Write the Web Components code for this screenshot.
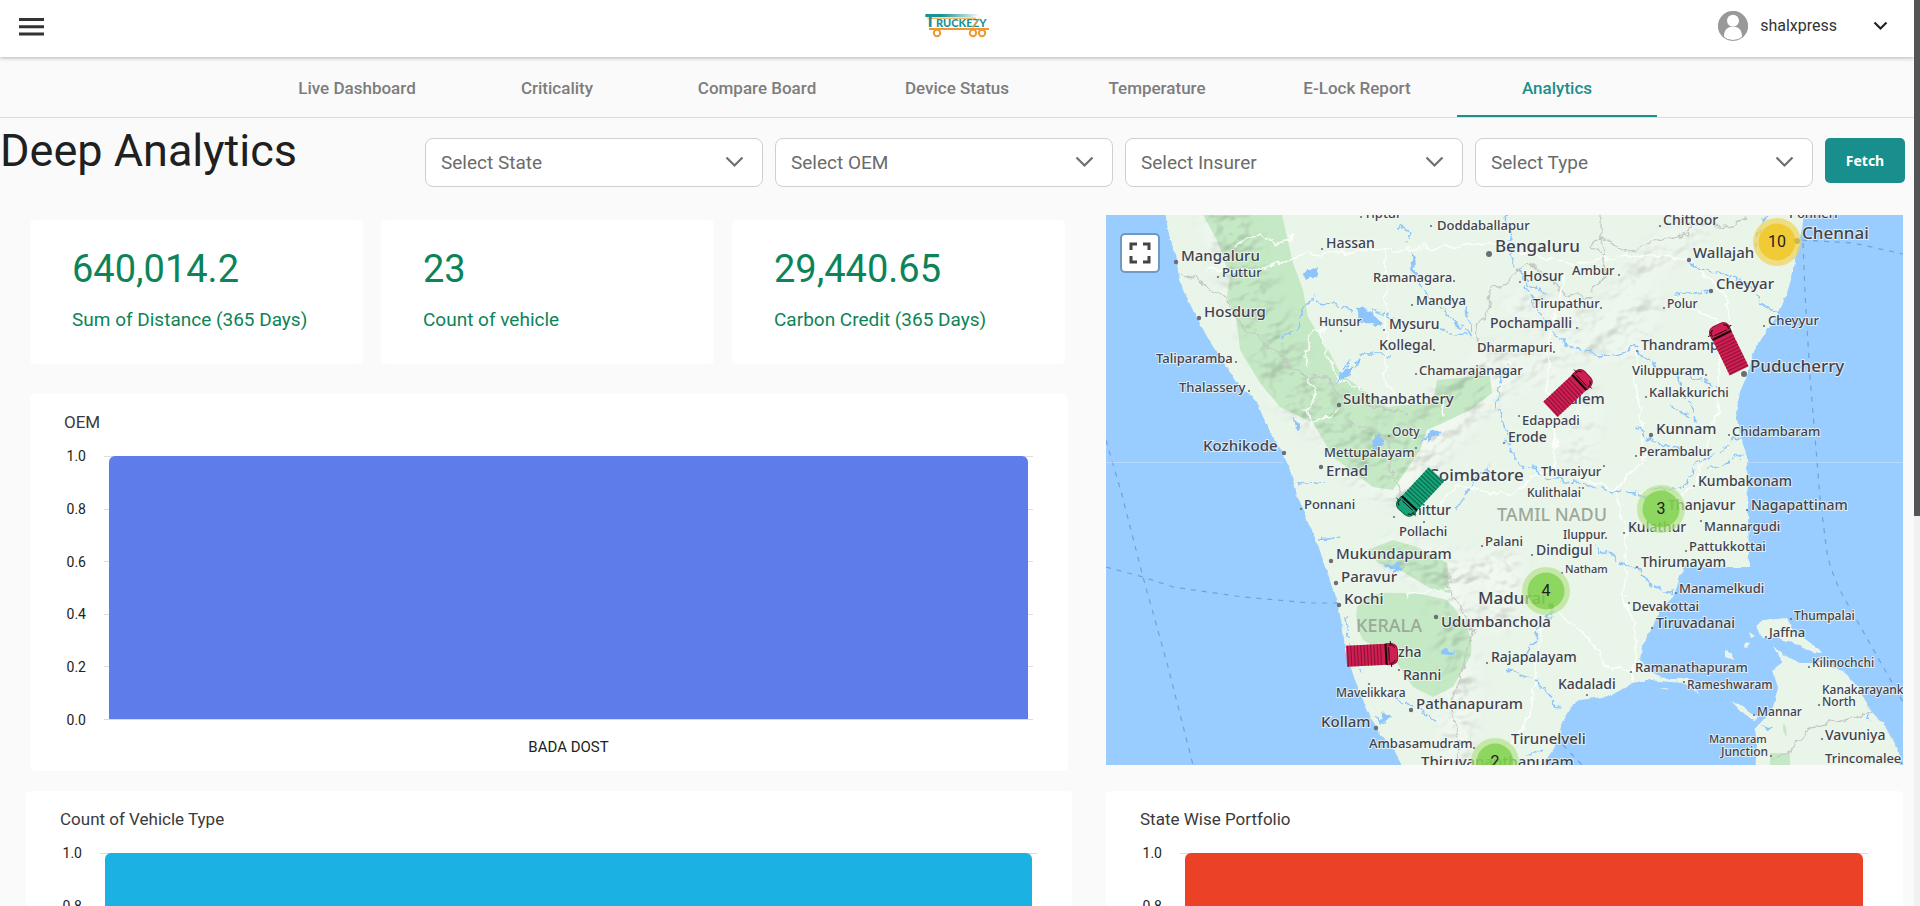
<!DOCTYPE html>
<html lang="en">
<head>
<meta charset="utf-8">
<title>Truckezy – Deep Analytics</title>
<style>
  html, body { margin: 0; height: 100%; }
  body { font-family: Roboto, "Liberation Sans", sans-serif; color: #212121; background: #fafafa; overflow: hidden; }
</style>
</head>
<body>
<app-shell>
  <app-header slot="header" user="shalxpress"></app-header>
  <tab-bar slot="header">
    <tab-link>Live Dashboard</tab-link>
    <tab-link>Criticality</tab-link>
    <tab-link>Compare Board</tab-link>
    <tab-link>Device Status</tab-link>
    <tab-link>Temperature</tab-link>
    <tab-link>E-Lock Report</tab-link>
    <tab-link active>Analytics</tab-link>
  </tab-bar>
  <filter-bar heading="Deep Analytics">
    <filter-select label="Select State"></filter-select>
    <filter-select label="Select OEM"></filter-select>
    <filter-select label="Select Insurer"></filter-select>
    <filter-select label="Select Type"></filter-select>
  </filter-bar>
  <dash-grid>
    <kpi-card slot="kpi" value="640,014.2">Sum of Distance (365 Days)</kpi-card>
    <kpi-card slot="kpi" value="23">Count of vehicle</kpi-card>
    <kpi-card slot="kpi" value="29,440.65">Carbon Credit (365 Days)</kpi-card>
    <bar-card slot="main" heading="OEM" category="BADA DOST" color="#5f7dea"></bar-card>
    <fleet-map slot="map"></fleet-map>
    <bar-card slot="bottom" heading="Count of Vehicle Type" color="#1cb1e3"></bar-card>
    <bar-card slot="bottom" heading="State Wise Portfolio" color="#eb4127"></bar-card>
  </dash-grid>
</app-shell>

<script>
const define = (name, html, setup) => {
  const tpl = document.createElement('template');
  tpl.innerHTML = html;
  customElements.define(name, class extends HTMLElement {
    constructor() {
      super();
      this.attachShadow({ mode: 'open' }).append(tpl.content.cloneNode(true));
    }
    connectedCallback() { if (setup) setup(this, this.shadowRoot); }
  });
};

define('app-shell', `
  <style>
    :host { display: grid; grid-template-columns: minmax(0, 1fr) 6px; height: 100vh; }
    .page { overflow-y: auto; scrollbar-width: none; }
    .rail { background: #f1f1f1; }
    .thumb { height: 57%; background: #555; }
  </style>
  <div class="page"><slot name="header"></slot><main><slot></slot></main></div>
  <div class="rail" aria-hidden="true"><div class="thumb"></div></div>
`);

define('app-header', `
  <style>
    :host { display: block; position: relative; z-index: 1; background: #fff; box-shadow: 0 1px 4px rgba(0,0,0,.28); }
    header { display: grid; grid-template-columns: 1fr auto 1fr; align-items: center; height: 57px; padding: 0 26px 0 18px; }
    button { display: flex; align-items: center; border: 0; padding: 0; background: none; font: inherit; color: inherit; cursor: pointer; }
    .logo { display: block; padding: 2px 0 0 8px; }
    .user { justify-self: end; font-size: 16px; line-height: 20px; color: #333; padding-bottom: 5px; }
    .name { margin: 0 36px 0 12px; }
    .menu { justify-self: start; padding-bottom: 4px; }
    svg { display: block; }
  </style>
  <header>
    <button class="menu" aria-label="Open menu">
      <svg width="28" height="18" viewBox="0 0 28 18"><path d="M1 1.5h25M1 8.8h25M1 16h25" stroke="#333" stroke-width="3"/></svg>
    </button>
    <a class="logo" href="#" aria-label="Truckezy">
      <svg width="66" height="34" viewBox="0 0 66 34">
        <defs><linearGradient id="g"><stop offset=".3" stop-color="#17949a"/><stop offset="1" stop-color="#17949a" stop-opacity="0"/></linearGradient></defs>
        <path d="M2 4.500h50v1.400H4z" fill="#f0a23c" opacity=".75"/>
        <path d="M1 1h56l-8 3H3z" fill="url(#g)"/>
        <text x="1" y="14" font-family="Lato, sans-serif" font-weight="900" font-size="17" fill="#17949a">T</text>
        <text x="12" y="14" font-family="Lato, sans-serif" font-weight="900" font-size="11" fill="#17949a">RUCKEZY</text>
        <path d="M54 6l2-1.500-6 10h-2z" fill="#f0982f"/>
        <path d="M5 16h60" stroke="#f0982f" stroke-width="2"/>
        <g fill="#fff" stroke="#f0982f" stroke-width="2"><circle cx="13" cy="20" r="3.200"/><circle cx="49" cy="20" r="3.200"/><circle cx="58" cy="20" r="3.200"/></g>
      </svg>
    </a>
    <button class="user">
      <svg width="30" height="30" viewBox="0 0 30 30"><defs><clipPath id="c"><circle cx="15" cy="15" r="15"/></clipPath></defs>
        <g clip-path="url(#c)"><path fill="#999" d="M0 0h30v30H0z"/><circle cx="15" cy="9.800" r="6" fill="#fff"/><path d="M6 30v-6q1-7 6-8h6q5 1 6 8v6z" fill="#fff"/></g><circle cx="15" cy="15" r="14.500" fill="none" stroke="#999"/></svg>
      <span class="name"></span>
      <svg width="15" height="10" viewBox="0 0 15 10"><path d="M1.500 1.500l6 6 6-6" fill="none" stroke="#222" stroke-width="2.200"/></svg>
    </button>
  </header>
`, (el, root) => { root.querySelector('.name').textContent = el.getAttribute('user'); });

define('tab-bar', `
  <style>
    :host { display: block; border-bottom: 1px solid #dcdcdc; }
    nav { display: flex; justify-content: center; height: 60px; }
  </style>
  <nav><slot></slot></nav>
`);

define('tab-link', `
  <style>
    :host { display: block; flex: 0 1 200px; }
    a { display: flex; box-sizing: border-box; height: 100%; align-items: center; justify-content: center; padding-top: 4px;
        border-bottom: 2px solid transparent; color: #7d7d7d; font-size: 17px; line-height: 20px; font-weight: 500; text-decoration: none; white-space: nowrap; }
    :host([active]) a { color: #1c8f8c; border-color: #1c8f8c; }
  </style>
  <a href="#"><slot></slot></a>
`);

define('filter-bar', `
  <style>
    :host { display: flex; align-items: flex-start; gap: 12px; padding: 7px 9px 0 0; }
    h1 { flex: 0 0 413px; margin: 0; font-size: 45px; line-height: 52px; font-weight: 400; color: #202020; }
    ::slotted(*) { margin-top: 13px; }
    button { flex: 0 0 80px; height: 45px; margin-top: 13px; border: 0; border-radius: 5px; background: #198f8d; color: #fff;
             font: 700 14px/20px "Noto Sans", sans-serif; cursor: pointer; }
  </style>
  <h1></h1>
  <slot></slot>
  <button type="button">Fetch</button>
`, (el, root) => { root.querySelector('h1').textContent = el.getAttribute('heading'); });

define('filter-select', `
  <style>
    :host { display: block; flex: 1 1 0; min-width: 0; position: relative; }
    select { display: block; appearance: none; box-sizing: border-box; width: 100%; height: 49px; padding: 0 48px 0 15px; border: 1px solid #cfcfcf;
             border-radius: 8px; background: #fff; color: #6b6b6b; font: 19px/24px Roboto, sans-serif; }
    svg { position: absolute; right: 19px; top: 18px; pointer-events: none; }
  </style>
  <select><option></option></select>
  <svg width="19" height="12" viewBox="0 0 19 12"><path d="M1.500 1.500l8 8 8-8" fill="none" stroke="#6c6f73" stroke-width="2.200"/></svg>
`, (el, root) => {
  const label = el.getAttribute('label');
  root.querySelector('select').setAttribute('aria-label', label);
  root.querySelector('option').textContent = label;
});

define('dash-grid', `
  <style>
    :host { display: grid; grid-template-columns: minmax(0, 1046fr) minmax(0, 797fr); column-gap: 34px; row-gap: 20px; padding: 28px 11px 80px 26px; }
    .left { display: flex; flex-direction: column; gap: 30px; padding: 5px 4px 0; }
    .kpis { display: grid; grid-template-columns: repeat(3, minmax(0, 1fr)); gap: 18px; padding-right: 3px; }
  </style>
  <div class="left"><div class="kpis"><slot name="kpi"></slot></div><slot name="main"></slot></div>
  <slot name="map"></slot>
  <slot name="bottom"></slot>
`);

define('kpi-card', `
  <style>
    :host { display: block; box-sizing: border-box; height: 144px; padding: 26px 12px 0 42px; background: #fff; border-radius: 5px; color: #0c8457; }
    p { margin: 0; white-space: nowrap; }
    .value { font-size: 38px; line-height: 46px; }
    .label { font-size: 19px; line-height: 24px; margin-top: 16px; }
  </style>
  <p class="value"></p>
  <p class="label"><slot></slot></p>
`, (el, root) => { root.querySelector('.value').textContent = el.getAttribute('value'); });

define('bar-card', `
  <style>
    :host { display: block; padding: 18px 35px 15px 34px; background: #fff; border-radius: 5px; }
    h2 { margin: 0 0 24px; font-size: 17px; line-height: 20px; font-weight: 400; color: #3a3a3a; }
    .chart { display: grid; grid-template-columns: 22px minmax(0, 1fr); column-gap: 18px; font-size: 14px; color: #222; }
    .axis { display: flex; flex-direction: column; justify-content: space-between; margin: -10px 0; line-height: 20px; text-align: right; }
    .plot { display: grid; height: 264px; }
    .lines, .bar { grid-area: 1 / 1; }
    .lines { display: flex; flex-direction: column; justify-content: space-between; }
    .lines i { height: 1px; background: #dcdcdc; }
    .bar { margin: 0 5px 1px; border-radius: 6px 6px 0 0; background: var(--bar); }
    .cat { grid-column: 2; margin-top: 18px; line-height: 18px; font-size: 15px; text-align: center; }
  </style>
  <h2></h2>
  <div class="chart">
    <div class="axis"><span>1.0</span><span>0.8</span><span>0.6</span><span>0.4</span><span>0.2</span><span>0.0</span></div>
    <div class="plot"><div class="lines"><i></i><i></i><i></i><i></i><i></i><i></i></div><div class="bar"></div></div>
    <div class="cat"></div>
  </div>
`, (el, root) => {
  root.querySelector('h2').textContent = el.getAttribute('heading');
  root.querySelector('.cat').textContent = el.getAttribute('category') || '';
  el.style.setProperty('--bar', el.getAttribute('color'));
});

/* Place names: [name, x, baseline, font size, dot x, dot y] */
const PLACES = [
  ['Tiptur',258,3,13,255,2],['Doddaballapur',331,15,13,325,11],['Hassan',220,33,14,216,34],['Mangaluru',75,46,15,70,47],
  ['Puttur',116,62,13,112,62],['Bengaluru',389,37,17,383,39],['Ramanagara',267,67,13,348,66],['Mandya',310,90,13,306,90],
  ['Hosdurg',98,102,15,93,103],['Hunsur',213,111,12,235,116],['Mysuru',283,114,14,278,115],['Kollegal',273,135,14,328,135],
  ['Pochampalli',384,113,14,471,113],['Dharmapuri',371,137,13,448,137],['Taliparamba',50,148,13,130,147],['Chamarajanagar',313,160,13,310,159],
  ['Thalassery',73,177,13,143,176],['Sulthanbathery',237,189,15,233,190],['Ooty',286,221,12,283,221],['Kozhikode',97,236,15,178,238],
  ['Mettupalayam',218,242,13,310,233],['Ernad',220,261,15,215,252],['Coimbatore',322,266,17],['Chittoor',557,10,14,554,11],
  ['Ponneri',683,3,13],['Chennai',696,24,17,691,26],['Wallajah',587,43,15,583,45],['Ambur',466,60,13,513,60],
  ['Hosur',417,66,14,414,67],['Cheyyar',610,74,15,605,76],['Tirupathur',427,93,13,495,93],['Polur',561,93,12,558,93],
  ['Cheyyur',662,110,13,658,111],['Thandrampet',535,135,14,531,136],['Viluppuram',526,160,13,600,160],['Puducherry',644,157,17,638,159],
  ['Kallakkurichi',543,182,13,540,182],['Salem',455,189,15],['Edappadi',416,210,13,413,201],['Erode',402,227,14,398,228],
  ['Kunnam',550,219,15,545,220],['Chidambaram',626,221,13,623,220],['Perambalur',533,241,13,530,241],['Thuraiyur',435,261,13,498,251],
  ['Kulithalai',421,282,12,477,273],['Kumbakonam',592,271,14,588,271],['Ponnani',198,294,13,195,294],['Chittur',298,300,14,288,302],
  ['Pollachi',293,321,13,318,307],['Mukundapuram',230,344,15,225,346],['Paravur',235,367,15,230,368],['Kochi',238,389,15,233,390],
  ['Udumbanchola',335,412,15,330,402],['Madurai',372,389,17,445,391],['Alappuzha',245,442,14],['Ranni',297,465,14,293,455],
  ['Mavelikkara',230,482,12,263,469],['Pathanapuram',310,494,15,305,495],['Rajapalayam',385,447,14,381,448],['Palani',379,331,13,376,331],
  ['Kollam',215,512,15,270,513],['Ambasamudram',263,533,13,368,533],['Thiruvananthapuram',315,552,15],
  ['Thanjavur',562,295,14],['Nagapattinam',645,295,14,641,295],['Kulathur',522,317,14,518,318],['Mannargudi',598,316,13,595,306],
  ['Iluppur',457,324,12,500,323],['Dindigul',430,340,14,426,340],['Pattukkottai',583,336,13,580,336],['Thirumayam',535,352,14,531,352],
  ['Natham',459,358,11,456,358],['Manamelkudi',573,378,13,570,378],['Devakottai',526,396,13,523,388],['Tiruvadanai',550,413,14,546,413],
  ['Thumpalai',688,405,12,685,404],['Jaffna',663,422,13,660,422],['Kilinochchi',706,452,12,703,452],['Ramanathapuram',529,457,13,525,457],
  ['Rameshwaram',581,474,12,578,467],['Kadaladi',452,474,14,481,480],['Kanakarayankulam',716,479,12],['North',716,491,12,713,490],
  ['Mannar',651,501,12,648,500],['Vavuniya',719,525,14,716,524],['Mannaram',603,528,11],['Junction',615,541,12,665,541],
  ['Trincomalee',719,548,13,795,548],['Tirunelveli',405,529,15]
];
/* Trucks: x, y, heading in degrees, paint */
const TRUCKS = [[266,440,-3,'r'],[622,133,-116,'r'],[463,177,-43,'r'],[313,278,133,'g']];
const CLUSTERS = [[671,27,10,'mid'],[555,294,3,'low'],[440,376,4,'low'],[389,547,2,'low']];

define('fleet-map', `
  <style>
    :host { display: block; position: relative; height: 550px; overflow: hidden; background: #99ccff; }
    svg.map { display: block; width: 100%; height: 100%; }
    .places text { font-family: "Noto Sans", sans-serif; font-weight: 500; fill: #41434f; stroke: #f3f8f2; stroke-width: 2px; stroke-opacity: .75; paint-order: stroke; }
    .places circle { fill: #6b6d78; }
    .region { font: 500 18px "Noto Sans", sans-serif; fill: #9ba89a; }
    .low .o { fill: #b5e28c; fill-opacity: .7 } .low .i { fill: #6ecc39; fill-opacity: .65 }
    .mid .o { fill: #f1d357; fill-opacity: .7 } .mid .i { fill: #f0c20c; fill-opacity: .65 }
    .clusters text { font: 16px Roboto, sans-serif; fill: #222; text-anchor: middle; }
    button { position: absolute; left: 14px; top: 18px; width: 40px; height: 40px; padding: 0; border: 2px solid rgba(0,0,0,.25); border-radius: 5px;
             background: #fff; background-clip: padding-box; display: grid; place-items: center; cursor: pointer; }
  </style>
  <svg class="map" viewBox="0 0 797 550" preserveAspectRatio="xMidYMid slice" role="img" aria-label="Fleet map of South India">
    <defs>
      <clipPath id="land"><use href="#india"/><use href="#lanka"/></clipPath>
      <filter id="wob" x="-5%" y="-5%" width="110%" height="110%"><feTurbulence type="fractalNoise" baseFrequency=".09" numOctaves="3" seed="4"/><feDisplacementMap in="SourceGraphic" scale="11" xChannelSelector="R" yChannelSelector="G"/></filter>
      <filter id="coast" x="-2%" y="-2%" width="104%" height="104%"><feTurbulence type="fractalNoise" baseFrequency=".12" numOctaves="2" seed="9"/><feDisplacementMap in="SourceGraphic" scale="4" xChannelSelector="R" yChannelSelector="G"/></filter>
      <filter id="soft"><feGaussianBlur stdDeviation="9"/></filter>
      <filter id="relief" x="0" y="0" width="100%" height="100%" color-interpolation-filters="sRGB">
        <feTurbulence type="fractalNoise" baseFrequency=".035 .045" numOctaves="3" seed="12"/>
        <feDiffuseLighting surfaceScale="7" diffuseConstant="1.12" lighting-color="#ffffff"><feDistantLight azimuth="225" elevation="62"/></feDiffuseLighting>
      </filter>
      <mask id="hills"><g filter="url(#soft)" fill="none" stroke="#fff" stroke-linecap="round" stroke-linejoin="round">
        <path d="M120 0L150 90 185 170 240 215 300 235M260 250L290 265 350 190 384 165" stroke-width="44"/>
        <path d="M290 340L350 360 345 420 355 470 350 530M350 360L400 350 390 400" stroke-width="30"/>
        <path d="M410 90L470 100 500 110 530 60 590 10M390 170L440 150 480 190 470 240M440 130L520 130 545 90" stroke-width="26" stroke="#aaa"/>
        <path d="M330 215L390 150" stroke-width="40"/>
      </g></mask>
    </defs>
    <rect width="797" height="550" fill="#99ccff"/>
    <g fill="#eaf5ea" filter="url(#coast)">
      <path id="india" d="M58-9L62 15 71 47 73 65 81 83 92 105 104 127 119 150 134 172 151 187 161 212 177 238 186 258 192 285 197 295 212 330 222 360 232 390 237 415 239 435 249 465 261 495 272 515 289 537 302 560H430L442 542 449 532 457 505 465 492 474 485 481 484 504 481 527 468 541 465 577 468 594 480 582 464 560 464 541 455 534 445 536 432 546 412 557 392 567 382 574 362 579 352H643L642 295 641 242 633 215 630 198 634 177 642 158 647 138 661 115 673 98 681 78 687 58 691 35 696 15 699-9Z"/>
      <path id="lanka" d="M649 560L651 528 649 515 657 505 667 492 672 472 666 455 677 447 667 432 685 444 694 448 714 448 737 455 754 475 764 495 777 508 791 532 796 560ZM649 411L657 405 681 403 687 415 714 435 716 439 707 438 687 428 671 423 657 422ZM626 487L637 491 652 502 648 506 636 497ZM619 436l7 3 1 6-8-3zM638 428l6 1-3 4-4-1zM643 417l6 4-4 2zM553 474l11-2-4 2z"/>
    </g>
    <g clip-path="url(#land)">
      <g fill="#c5e8c5">
        <path d="M97 0H176L181 22 187 48 197 75 202 102 224 138 234 158 257 175 281 192 327 187 331 165 384 160 386 178 364 195 337 208 321 215 314 235 287 275 267 272 227 242 207 208 174 192 154 168 134 135 131 108 121 82 124 62 111 25Z"/>
        <path d="M251 392Q262 376 290 378L311 378 341 385Q372 418 364 442L347 472 327 482 307 472 287 442 257 425Q248 410 251 392Z"/>
        <path d="M261 335L287 325 311 332 341 348 344 378 327 375 294 355 272 348Z"/>
        <path d="M664 538h20v12h-20zM678 508q4 6 2 14-5-8-2-14z"/>
      </g>
      <g mask="url(#hills)" style="mix-blend-mode:multiply"><rect width="797" height="550" filter="url(#relief)" opacity=".3"/></g>
      <g fill="none" filter="url(#wob)">
        <path d="M494-5V22L484 30 494 40M400 70L411 55 421 50 440 62 460 80 484 82M421 50L440 58M484 77L500 60 494 22 521 37 551 27 581 20 584 8 627 12 640 0M404 68L386 73 382 95 371 115 374 135M72 62L91 63 107 75 122 88 141 115 167 135 194 158 224 165 234 182 277 195 301 198M241 205L281 225 287 262 300 290M341 352L344 375 367 415 354 462 344 495 354 528 350 550M666 545L690 530 705 512 740 505 765 498" stroke="#c3c8c2" stroke-width="1.300"/>
        <path d="M130 30L155 18 170 28 187 22M100 55H150L175 50 195 40 280 35 330 33 383 28 430 40 465 50 520 40 560 42 583 45 620 80 634 158M280 35V170L300 190M213 117L230 165 260 175M200 150L205 120 222 112M200 160L210 180 200 195 205 210 225 200 233 190M340 200L335 180M460 60L445 110 440 170 450 220 448 250 400 280 350 270 335 290M448 250L470 262 510 275 540 240 530 170 531 136M510 275L520 320 518 380 530 420 527 466M445 391L430 440 425 500 405 530M445 391L480 420 500 450 525 457M345 375L330 375 300 380M570 80L615 110 611 200 590 270 560 290" stroke="#fff" stroke-width="1.600" opacity=".85"/>
        <path d="M290 10L305 15 300 30M305 35L310 65 325 85 340 100 365 120 362 90M210 85L225 90 245 95M175 122L190 115 200 90 210 80M265 95L290 105M245 145L230 162 250 150 255 140 285 140M335 115L365 120M400 0L405 40 430 90 445 115 460 130 500 142 530 133 555 155 580 160 610 170M420 65L440 80M570 160L590 205 560 190M530 210L545 225 575 235M585 50L620 60 650 75 655 90 675 100M570 80L605 76M660 0L650 30M545 275L580 270 590 250 630 225 641 215M600 255L640 240M545 280L500 275 440 262 410 245 400 220 390 190 400 150M350 295L365 270 385 250M190 270L220 268M215 325L235 322M490 330L510 345 531 352 545 370 567 378M446 395L420 440M400 455L430 465 455 495M285 480L330 505M240 400L243 430 255 460M315 225L335 215M420 540L440 535M280 510L270 500" stroke="#8cc4fb" stroke-width="1.500" stroke-dasharray="14 2 9 3"/>
      </g>
      <g fill="#8cc4fb" filter="url(#wob)"><path d="M250 92l12 3 14 12-4 4-20-6zM232 160l16-10-4 12-14 5zM200 57l12-5-2 10-8 3zM268 225l6-6 2 10-8 6zM322 216l6-4 8 4-14 12zM305 40l4 0 1 18-3 0zM186 204l10 8-4 4zM276 352l22-1-6 4h-12zM336 436l10-2-2 6-8-1zM655 510l12 3-4 4zM760 500l6 8-5-3zM276 497l8 5-9 8z"/></g>
    </g>
    <g fill="none" stroke="#6fa3d8" stroke-dasharray="5 6" stroke-width="1.200">
      <path d="M0 225L16 280 37 362 61 448 87 550M0 352L37 362 67 372 137 382 204 388 232 388M697 28L699 78 704 162 714 282 721 338Q726 362 741 388L797 487M696 25L747 28 797 39M457 530L476 550"/>
    </g>
    <path d="M0 247.500H177M641 247.500H797" stroke="#b4d9fd" stroke-width="1"/>
    <text class="region" x="250" y="417">KERALA</text><text class="region" x="391" y="306">TAMIL NADU</text>
    <g class="places"></g>
    <g class="trucks"></g>
    <g class="clusters"></g>
  </svg>
  <button type="button" aria-label="Toggle fullscreen"><svg width="22" height="22" viewBox="0 0 22 22"><path d="M2 8V2h6M14 2h6v6M20 14v6h-6M8 20H2v-6" fill="none" stroke="#444" stroke-width="3"/></svg></button>
`, (el, root) => {
  const $ = s => root.querySelector(s);
  $('.places').innerHTML = PLACES.map(([n, x, y, s, dx, dy]) =>
    (dx === undefined ? '' : `<circle cx="${dx}" cy="${dy}" r="${s > 16 ? 3 : s > 14 ? 2.2 : 1.1}"/>`) +
    `<text x="${x}" y="${y}" font-size="${s}">${n}</text>`).join('');
  const ribs = Array.from({ length: 11 }, (_, i) => `M${-24 + i * 3.3}-10.500v21`).join('');
  $('.trucks').innerHTML = TRUCKS.map(([x, y, a, c]) => {
    const [paint, rib] = c === 'r' ? ['#cf1f52', '#8f1238'] : ['#17a377', '#0a6a4c'];
    return `<g transform="translate(${x} ${y}) rotate(${a})"><path d="M-25.500-10.500h40v21h-40z" fill="${paint}"/><path d="${ribs}" stroke="${rib}" stroke-width="1.100"/>
      <path d="M15-10.500h5q5 1 5.500 6v9q-.5 5-5.500 6h-5z" fill="${paint}" stroke="${rib}"/><path d="M14-10.500v21" stroke="#15060b" stroke-width="2"/><path d="M19-13v3M19 10v3M17-9h4l2 3M17 9h4l2-3M17-7v14" fill="none" stroke="#15060b" stroke-width=".9"/></g>`;
  }).join('');
  $('.clusters').innerHTML = CLUSTERS.map(([x, y, n, c]) =>
    `<g class="${c}"><circle class="o" cx="${x}" cy="${y}" r="24"/><circle class="i" cx="${x}" cy="${y}" r="18.500"/><text x="${x}" y="${y + 5}">${n}</text></g>`).join('');
});
</script>
</body>
</html>
